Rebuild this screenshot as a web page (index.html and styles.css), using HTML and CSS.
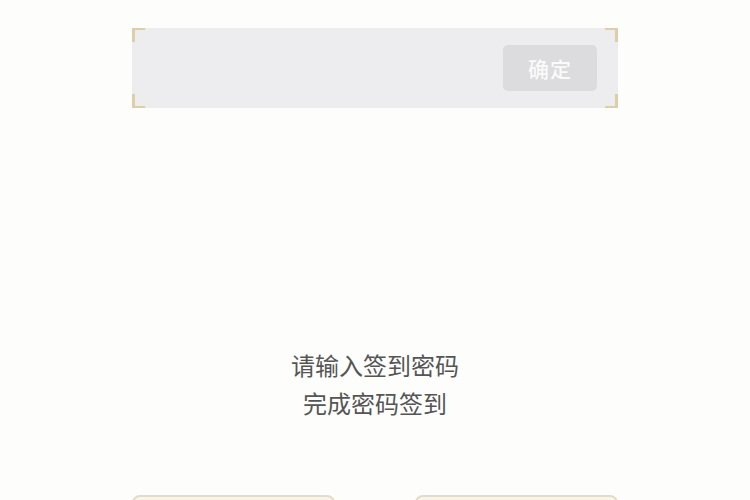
FILE: index.html
```html
<!DOCTYPE html>
<html lang="zh">
<head>
<meta charset="utf-8">
<link rel="stylesheet" href="styles.css">
</head>
<body>
<div class="page">
  <div class="input-box">
    <span class="corner tl"></span>
    <span class="corner tr"></span>
    <span class="corner bl"></span>
    <span class="corner br"></span>
    <div class="confirm">确定</div>
  </div>
  <div class="hint">
    <p>请输入签到密码</p>
    <p>完成密码签到</p>
  </div>
  <div class="actions">
    <div class="action"></div>
    <div class="action"></div>
  </div>
</div>
</body>
</html>
```
FILE: styles.css
```css
html, body {
  margin: 0;
  padding: 0;
  background: #fdfdfc;
  font-family: "Noto Sans CJK SC", "Noto Sans", sans-serif;
}
.page {
  width: 750px;
  height: 500px;
  overflow: hidden;
  display: flex;
  flex-direction: column;
  align-items: center;
}
.input-box {
  position: relative;
  box-sizing: border-box;
  width: 486px;
  height: 80px;
  margin-top: 28px;
  background: #edecee;
  display: flex;
  justify-content: flex-end;
  align-items: center;
  padding-right: 21px;
  flex-shrink: 0;
}
.corner {
  position: absolute;
  width: 10px;
  height: 12px;
  border-color: #dccfa8;
  border-style: solid;
  border-width: 0;
}
.tl { left: 0; top: 0; border-left-width: 3px; border-top-width: 2px; }
.tr { right: 0; top: 0; border-right-width: 3px; border-top-width: 2px; }
.bl { left: 0; bottom: 0; border-left-width: 3px; border-bottom-width: 2px; }
.br { right: 0; bottom: 0; border-right-width: 3px; border-bottom-width: 2px; }
.confirm {
  width: 94px;
  height: 46px;
  border-radius: 5px;
  background: #dcdbdd;
  color: #fafafa;
  font-size: 21px;
  font-weight: 500;
  display: flex;
  align-items: center;
  justify-content: center;
  letter-spacing: 1px;
}
.hint {
  margin-top: 238px;
  text-align: center;
  color: #555;
  font-size: 24px;
  line-height: 38px;
  flex-shrink: 0;
}
.hint p { margin: 0; }
.actions {
  margin-top: 73px;
  display: flex;
  gap: 80px;
  flex-shrink: 0;
}
.action {
  width: 203px;
  height: 40px;
  border: 2px solid #e3dcc6;
  border-radius: 8px;
  box-sizing: border-box;
  background: #f7f5ee;
}
```
